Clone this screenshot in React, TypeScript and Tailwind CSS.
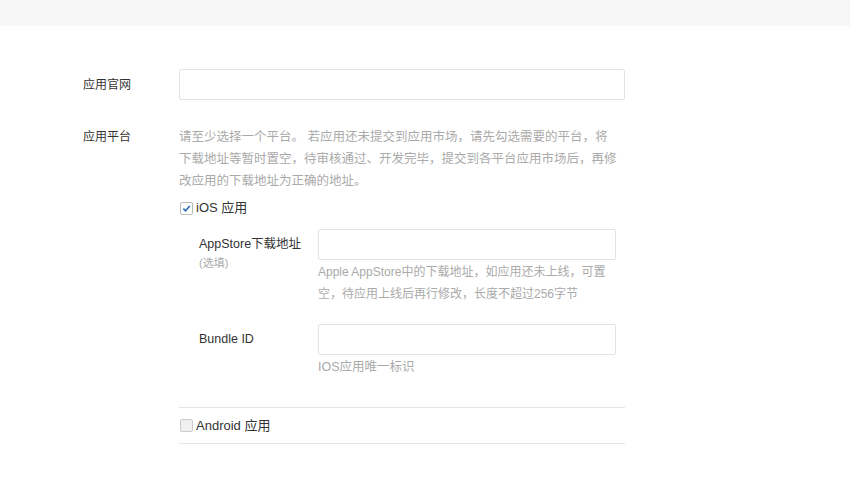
export default function App() {
  const f = { fontFamily: '"Liberation Sans","Noto Sans CJK SC",sans-serif' };
  return (
    <div className="w-[850px] h-[487px] bg-white text-[12px] text-[#333]" style={f}>
      <div className="h-[26px] bg-[#f7f7f7]" />
      <div className="pl-[83px] pt-[43px]">
        <div className="flex items-start">
          <div className="w-[96px] pt-[8px] leading-[16px]">应用官网</div>
          <div className="w-[446px] h-[31px] border border-[#e3e3e3] rounded-[2px]" />
        </div>
        <div className="flex items-start mt-[26px]">
          <div className="w-[96px] pt-[3px] leading-[16px]">应用平台</div>
          <div className="w-[446px]">
            <p className="text-[#aaa] text-[12.5px] leading-[22px] w-[440px]">
              请至少选择一个平台。 若应用还未提交到应用市场，请先勾选需要的平台，将下载地址等暂时置空，待审核通过、开发完毕，提交到各平台应用市场后，再修改应用的下载地址为正确的地址。
            </p>
            <div className="flex items-center mt-[8px] h-[16px]">
              <span className="w-[13px] h-[13px] border border-[#bbb] rounded-[2px] bg-white flex items-center justify-center ml-[1px]">
                <svg width="9" height="9" viewBox="0 0 10 10"><path d="M1.5 5.2 L4 7.6 L8.6 2.2" stroke="#2a6fb8" strokeWidth="1.8" fill="none" /></svg>
              </span>
              <span className="ml-[3px] text-[13px]">iOS 应用</span>
            </div>
            <div className="pl-[20px] mt-[13px]">
              <div className="flex items-start">
                <div className="w-[119px] pt-[7px]">
                  <div className="text-[12.5px] leading-[16px]">AppStore下载地址</div>
                  <div className="text-[#aaa] text-[11px] leading-[16px] mt-[3px]">(选填)</div>
                </div>
                <div>
                  <div className="w-[298px] h-[31px] border border-[#e3e3e3] rounded-[2px]" />
                  <p className="text-[#aaa] text-[12px] leading-[22px] mt-[1px] w-[298px]">Apple AppStore中的下载地址，如应用还未上线，可置空，待应用上线后再行修改，长度不超过256字节</p>
                </div>
              </div>
              <div className="flex items-start mt-[19px]">
                <div className="w-[119px] pt-[7px] text-[12.5px] leading-[16px]">Bundle ID</div>
                <div>
                  <div className="w-[298px] h-[31px] border border-[#e3e3e3] rounded-[2px]" />
                  <p className="text-[#aaa] text-[12.5px] leading-[22px] mt-[1px]">IOS应用唯一标识</p>
                </div>
              </div>
            </div>
            <div className="border-t border-[#e5e5e5] mt-[29px] h-[37px] flex items-center border-b">
              <span className="w-[13px] h-[13px] border border-[#ccc] rounded-[2px] bg-[#f0f0f0] ml-[1px]" />
              <span className="ml-[3px] text-[13px]">Android 应用</span>
            </div>
          </div>
        </div>
      </div>
    </div>
  );
}
